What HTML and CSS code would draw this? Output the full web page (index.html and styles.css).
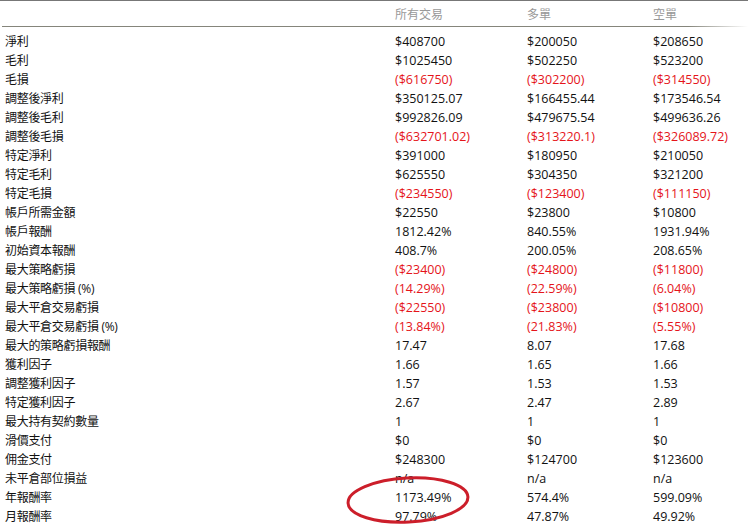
FILE: index.html
```html
<!DOCTYPE html>
<html lang="zh-Hant">
<head>
<meta charset="utf-8">
<link rel="stylesheet" href="styles.css">
</head>
<body>
<div class="stats">
  <div class="row head"><div></div><div>所有交易</div><div>多單</div><div>空單</div></div>
  <div class="body">
    <div class="row"><div>淨利</div><div>$408700</div><div>$200050</div><div>$208650</div></div>
    <div class="row"><div>毛利</div><div>$1025450</div><div>$502250</div><div>$523200</div></div>
    <div class="row"><div>毛損</div><div class="neg">($616750)</div><div class="neg">($302200)</div><div class="neg">($314550)</div></div>
    <div class="row"><div>調整後淨利</div><div>$350125.07</div><div>$166455.44</div><div>$173546.54</div></div>
    <div class="row"><div>調整後毛利</div><div>$992826.09</div><div>$479675.54</div><div>$499636.26</div></div>
    <div class="row"><div>調整後毛損</div><div class="neg">($632701.02)</div><div class="neg">($313220.1)</div><div class="neg">($326089.72)</div></div>
    <div class="row"><div>特定淨利</div><div>$391000</div><div>$180950</div><div>$210050</div></div>
    <div class="row"><div>特定毛利</div><div>$625550</div><div>$304350</div><div>$321200</div></div>
    <div class="row"><div>特定毛損</div><div class="neg">($234550)</div><div class="neg">($123400)</div><div class="neg">($111150)</div></div>
    <div class="row"><div>帳戶所需金額</div><div>$22550</div><div>$23800</div><div>$10800</div></div>
    <div class="row"><div>帳戶報酬</div><div>1812.42%</div><div>840.55%</div><div>1931.94%</div></div>
    <div class="row"><div>初始資本報酬</div><div>408.7%</div><div>200.05%</div><div>208.65%</div></div>
    <div class="row"><div>最大策略虧損</div><div class="neg">($23400)</div><div class="neg">($24800)</div><div class="neg">($11800)</div></div>
    <div class="row"><div>最大策略虧損 (%)</div><div class="neg">(14.29%)</div><div class="neg">(22.59%)</div><div class="neg">(6.04%)</div></div>
    <div class="row"><div>最大平倉交易虧損</div><div class="neg">($22550)</div><div class="neg">($23800)</div><div class="neg">($10800)</div></div>
    <div class="row"><div>最大平倉交易虧損 (%)</div><div class="neg">(13.84%)</div><div class="neg">(21.83%)</div><div class="neg">(5.55%)</div></div>
    <div class="row"><div>最大的策略虧損報酬</div><div>17.47</div><div>8.07</div><div>17.68</div></div>
    <div class="row"><div>獲利因子</div><div>1.66</div><div>1.65</div><div>1.66</div></div>
    <div class="row"><div>調整獲利因子</div><div>1.57</div><div>1.53</div><div>1.53</div></div>
    <div class="row"><div>特定獲利因子</div><div>2.67</div><div>2.47</div><div>2.89</div></div>
    <div class="row"><div>最大持有契約數量</div><div>1</div><div>1</div><div>1</div></div>
    <div class="row"><div>滑價支付</div><div>$0</div><div>$0</div><div>$0</div></div>
    <div class="row"><div>佣金支付</div><div>$248300</div><div>$124700</div><div>$123600</div></div>
    <div class="row"><div>未平倉部位損益</div><div>n/a</div><div>n/a</div><div>n/a</div></div>
    <div class="row"><div>年報酬率</div><div>1173.49%</div><div>574.4%</div><div>599.09%</div></div>
    <div class="row"><div>月報酬率</div><div>97.79%</div><div>47.87%</div><div>49.92%</div></div>
  </div>
  <svg class="mark" width="130" height="56" viewBox="0 0 130 56">
    <ellipse cx="63" cy="27" rx="60" ry="22" transform="rotate(-3 63 27)" fill="none" stroke="#cc1e2a" stroke-width="3"/>
  </svg>
</div>
</body>
</html>
```
FILE: styles.css
```css
html, body {
  margin: 0;
  background: #fff;
}
.stats {
  position: relative;
  border-top: 1px solid #777;
  font-family: "Open Sans", "Noto Sans CJK TC", sans-serif;
  font-size: 12.5px;
  color: #111;
  height: 524px;
  overflow: hidden;
}
.row {
  display: grid;
  grid-template-columns: 390px 132px 126px 1fr;
  height: 19px;
  line-height: 19px;
  white-space: nowrap;
}
.row > div {
  padding-left: 5px;
}
.row > div:first-child {
  font-size: 12px;
  letter-spacing: -0.3px;
}
.head {
  height: 26px;
  line-height: 18px;
  color: #999;
  font-size: 12px;
  background-image: linear-gradient(to right, #85857b 0, #85857b 92%, rgba(133,133,123,0) 100%);
  background-repeat: no-repeat;
  background-size: calc(100% - 2px) 1px;
  background-position: 2px 100%;
}
.head > div {
  padding-top: 5px;
}
.body {
  padding-top: 5px;
}
.neg {
  color: #e5141a;
}
.mark {
  position: absolute;
  left: 345px;
  top: 472px;
}
```
